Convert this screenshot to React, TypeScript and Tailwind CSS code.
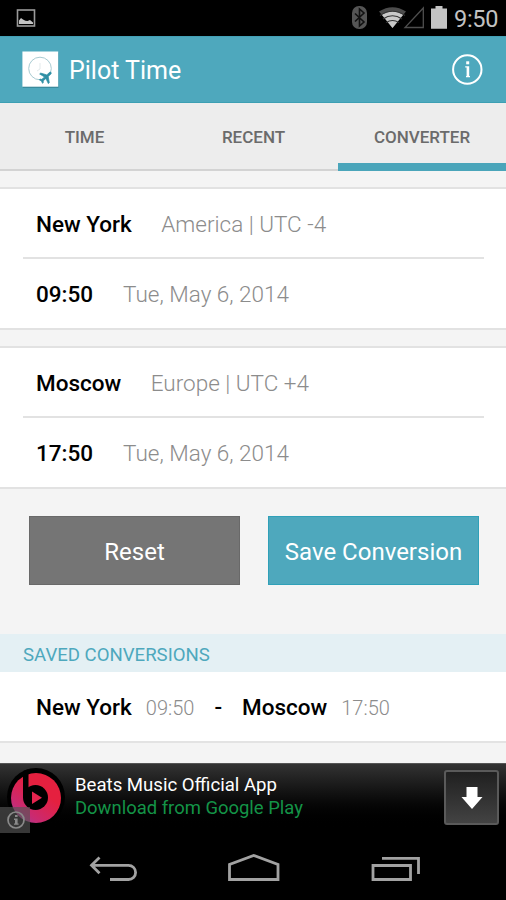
import React from 'react';

const roboto = "font-['Roboto','Noto_Sans',sans-serif]";

function StatusBar() {
  return (
    <div className="flex h-9 shrink-0 items-center bg-black pl-4 pr-[7px]">
      <svg width="20" height="20" viewBox="0 0 20 20">
        <rect x="1.5" y="2" width="17" height="16" fill="none" stroke="#9a9a9a" strokeWidth="1.6" />
        <path d="M3 16V12.500l2-2.500 2 1.500 2.500 1.200 2 .3L14 12l3 2.500v1.500z" fill="#c4c4c4" />
      </svg>
      <svg className="ml-auto" width="104" height="28" viewBox="350 4 104 28">
        <rect x="352" y="6" width="15" height="23" rx="7" fill="#555" />
        <path d="M355 13.5l9 8.5-4.5 4V9l4.5 4-9 8.5" fill="none" stroke="#111" strokeWidth="1.6" />
        <path d="M392.500 28L379 11.500q13.500-8.500 27 0z" fill="#4c4c4c" />
        <path d="M392.500 28L381.800 14.800q10.700-7 21.400 0z" fill="#c8c8c8" />
        <path d="M380 15.500q12.500-8.500 25 0M383 19q9.500-6.500 19 0M386 22.600q6.500-4.200 13 0" fill="none" stroke="#333" strokeWidth="1.1" />
        <path d="M405 27.500H423.300V8z" fill="none" stroke="#4e4e4e" strokeWidth="1.3" />
        <path d="M431 8.500h4.500V6h7v2.500H447V28.700H431z" fill="#c4c4c4" />
      </svg>
      <span className="w-[45px] pt-[2px] text-[23.500px] leading-9 tracking-[-0.300px] text-[#c2c2c2]">9:50</span>
    </div>
  );
}

function AppBar() {
  return (
    <header className="flex h-[67px] shrink-0 items-center border-b border-[#3c9fb3] bg-[#4ea8bd] pl-[22px] pr-[23px] shadow-[inset_0_1px_0_#43a0b5]">
      <svg width="37" height="37" viewBox="0 0 37 37">
        <rect x=".8" y="1.500" width="35.700" height="35.500" fill="#3b8b9d" />
        <rect x=".4" y=".5" width="35.800" height="35.200" fill="#fff" />
        <circle cx="18" cy="17.500" r="11.300" fill="none" stroke="#a9cbd2" strokeWidth="1" />
        <path d="M18 12v6l-3 2" fill="none" stroke="#e3eaec" strokeWidth="1" />
        <g transform="translate(24 26) rotate(48) scale(.68) translate(-11.500 -12)">
          <path
            d="M21 16v-2l-8-5V3.500c0-.83-.67-1.500-1.500-1.500S10 2.670 10 3.500V9l-8 5v2l8-2.500V19l-2 1.500V22l3.500-1 3.500 1v-1.500L13 19v-5.500l8 2.500z"
            fill="#2f8fa5"
            stroke="#2f8fa5"
            strokeWidth="1"
          />
        </g>
      </svg>
      <h1 className="ml-[10px] pt-[3px] text-[25px] leading-8 text-white">Pilot Time</h1>
      <svg className="ml-auto" width="32" height="32" viewBox="0 0 32 32">
        <circle cx="16.300" cy="16.500" r="14.200" fill="none" stroke="#fff" strokeWidth="2" />
        <rect x="15.200" y="8.300" width="3" height="3" fill="#fff" />
        <path d="M14.200 13.300h4v9.700H19v1.200h-4v-1.200h.6v-8.500h-1.400z" fill="#fff" />
      </svg>
    </header>
  );
}

function Tabs() {
  const base = 'h-[68px] text-center text-[17px] font-medium leading-[69px]';
  return (
    <nav className="grid h-[68px] shrink-0 grid-cols-[169px_169px_168px] grid-rows-[68px] bg-[#ededed] text-[#6b6b6b]">
      <div className={base + ' border-b-2 border-[#d3d3d3]'}>TIME</div>
      <div className={base + ' border-b-2 border-[#d3d3d3]'}>RECENT</div>
      <div className={base + ' border-b-8 border-[#4aa5ba]'}>CONVERTER</div>
    </nav>
  );
}

type CardProps = { city: string; zone: string; time: string; date: string };

function Card({ city, zone, time, date }: CardProps) {
  const row = 'flex items-baseline';
  return (
    <section className="h-[143px] shrink-0 border-y-2 border-[#e2e2e2] bg-white">
      <div className={row + ' ml-[23px] mr-[22px] h-[70px] border-b-2 border-[#e2e2e2] pl-[13px] leading-[71px]'}>
        <span className="text-[22.500px] font-medium text-black">{city}</span>
        <span className="ml-[29.500px] text-[22.500px] font-light text-[#8c8c8c]">{zone}</span>
      </div>
      <div className={row + ' h-[69px] pl-9 leading-[71px]'}>
        <span className="text-[22.500px] font-medium text-black">{time}</span>
        <span className="ml-[30px] text-[22.500px] font-light text-[#8c8c8c]">{date}</span>
      </div>
    </section>
  );
}

function Actions() {
  return (
    <div className="flex h-[145px] shrink-0 gap-7 pl-[29px] pt-[27px]">
      <button className="h-[69px] w-[211px] border border-[#696969] bg-[#757575] pt-[3px] text-[24px] text-white">
        Reset
      </button>
      <button className="h-[69px] w-[211px] border border-[#2fa0b8] bg-[#4ea8bd] pt-[3px] text-[24px] text-white">
        Save Conversion
      </button>
    </div>
  );
}

function Saved() {
  return (
    <section className="shrink-0">
      <h2 className="h-[38px] bg-[#e4f0f4] pl-[23px] text-[18.600px] leading-[42px] text-[#4ea8bd]">SAVED CONVERSIONS</h2>
      <div className="flex h-[71px] items-baseline border-b-2 border-[#e3e3e3] bg-white pl-9 leading-[71px]">
        <span className="text-[22.500px] font-medium text-black">New York</span>
        <span className="ml-[14px] text-[20px] font-light text-[#8c8c8c]">09:50</span>
        <span className="ml-5 text-[22.500px] font-medium text-black">-</span>
        <span className="ml-5 text-[22.500px] font-medium text-black">Moscow</span>
        <span className="ml-[14px] text-[20px] font-light text-[#8c8c8c]">17:50</span>
      </div>
    </section>
  );
}

function AdBanner() {
  return (
    <div className="flex h-[75px] shrink-0 border-t border-[#555] bg-linear-to-b from-[#333] to-black to-90%">
      <svg width="66" height="74" viewBox="0 764 66 74">
        <defs>
          <linearGradient id="beats" x1="0" y1="1" x2=".55" y2=".3">
            <stop offset="0" stopColor="#8f46a5" />
            <stop offset=".4" stopColor="#c92a72" />
            <stop offset="1" stopColor="#e5203f" />
          </linearGradient>
        </defs>
        <circle cx="36" cy="797" r="29" fill="#000" />
        <circle cx="36" cy="798" r="25" fill="url(#beats)" />
        <circle cx="35.500" cy="797.500" r="12.500" fill="#000" />
        <path d="M23 771v27h5.500v-29z" fill="#000" />
        <path d="M32 791.500v12.500l10-6.200z" fill="#e5254f" />
        <rect x="0" y="807" width="30" height="26" fill="#555" fillOpacity=".65" />
        <circle cx="16" cy="820" r="8" fill="none" stroke="#8a8a8a" strokeWidth="1.700" />
        <path d="M15 815h2.600v2H15zM14 818.500h3.600v5h1v1.300h-4.600v-1.300h1v-3.500h-1z" fill="#8a8a8a" />
      </svg>
      <div className="ml-[9px] pt-[10px] leading-[23px]">
        <p className="text-[18.600px] text-white">Beats Music Official App</p>
        <p className="text-[18.450px] text-[#149447]">Download from Google Play</p>
      </div>
      <div className="ml-auto mr-[7px] mt-[6px] flex size-[55px] items-center justify-center rounded-[3px] border-2 border-[#5a5a5a] bg-linear-to-b from-[#202020] to-[#434343]">
        <svg width="22" height="24" viewBox="0 0 22 24">
          <path d="M5.500 1h11v10h5L11 23 .5 11h5z" fill="#fff" />
        </svg>
      </div>
    </div>
  );
}

function NavBar() {
  return (
    <div className="h-[62px] shrink-0 bg-black">
      <svg width="506" height="62" viewBox="0 838 506 62" fill="none" stroke="#a2a2a2" strokeWidth="2.8">
        <path d="M92 865.300h36.500a7 7 0 0 1 0 14.200h-18.500M99.500 857.500l-8 7.800 8 8" />
        <path d="M229.500 864.500v15h48.500v-15l-24.300-9z" />
        <path d="M373 865.500h37.500v14h-37.500zM382 858.300h36.500V874" />
      </svg>
    </div>
  );
}

export default function App() {
  return (
    <main className={roboto + ' flex h-[900px] w-[506px] flex-col overflow-hidden bg-[#f4f4f4]'}>
      <StatusBar />
      <AppBar />
      <Tabs />
      <div className="h-[15.500px] shrink-0" />
      <Card city="New York" zone="America | UTC -4" time="09:50" date="Tue, May 6, 2014" />
      <div className="h-[16.500px] shrink-0" />
      <Card city="Moscow" zone="Europe | UTC +4" time="17:50" date="Tue, May 6, 2014" />
      <Actions />
      <Saved />
      <div className="flex-1" />
      <AdBanner />
      <NavBar />
    </main>
  );
}
